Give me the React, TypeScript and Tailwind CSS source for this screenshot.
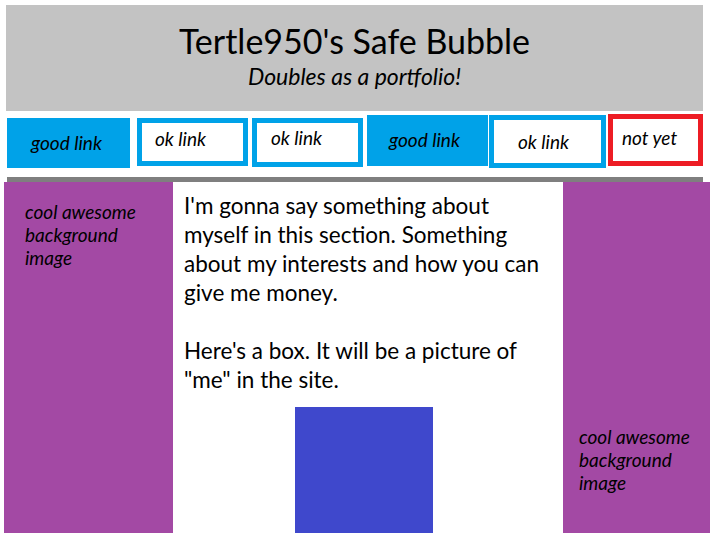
const navFont = "font-['Lato',sans-serif] italic text-[19px] text-black";

export default function App() {
  return (
    <div className="w-[710px] h-[533px] overflow-hidden bg-white font-['Lato',sans-serif] text-black">
      {/* header */}
      <div className="ml-[6px] mt-[5px] w-[697px] h-[106px] bg-[#c3c3c3] flex flex-col items-center pt-[17px]">
        <h1 className="text-[34px] leading-[37px]">Tertle950's Safe Bubble</h1>
        <p className="text-[23px] leading-[26px] italic mt-[4px]">Doubles as a portfolio!</p>
      </div>

      {/* nav */}
      <div className="flex items-start mt-[3px] h-[55px]">
        <div className={`ml-[7px] mt-[4px] w-[123px] h-[50px] bg-[#00a2e8] pl-[24px] pt-[11px] ${navFont}`}>good link</div>
        <div className={`ml-[7px] mt-[4px] w-[111px] h-[48px] border-[5px] border-[#00a2e8] pl-[13px] pt-[2px] ${navFont}`}>ok link</div>
        <div className={`ml-[4px] mt-[4px] w-[111px] h-[49px] border-[5px] border-[#00a2e8] pl-[14px] pt-[1px] ${navFont}`}>ok link</div>
        <div className={`ml-[4px] mt-[1px] w-[121px] h-[51px] bg-[#00a2e8] pl-[22px] pt-[11px] ${navFont}`}>good link</div>
        <div className={`ml-[1px] mt-[1px] w-[117px] h-[53px] border-[5px] border-[#00a2e8] pl-[24px] pt-[8px] ${navFont}`}>ok link</div>
        <div className={`ml-[2px] w-[95px] h-[52px] border-[5px] border-[#ed1c24] pl-[9px] pt-[5px] ${navFont}`}>not yet</div>
      </div>

      {/* divider */}
      <div className="ml-[7px] mt-[8px] w-[696px] h-[5px] bg-[#7f7f7f]" />

      {/* main */}
      <div className="flex h-[352px]">
        <div className="ml-[4px] w-[169px] bg-[#a349a4] pl-[21px] pt-[18px] italic text-[19px] leading-[23px]">
          cool awesome
          <br />
          background
          <br />
          image
        </div>
        <div className="w-[390px] flex flex-col">
          <div className="pl-[11px] pt-[9px] text-[22.5px] leading-[29px]">
            <p>
              I'm gonna say something about
              <br />
              myself in this section. Something
              <br />
              about my interests and how you can
              <br />
              give me money.
            </p>
            <p className="mt-[29px]">
              Here's a box. It will be a picture of
              <br />
              "me" in the site.
            </p>
          </div>
          <div className="ml-[122px] mt-[13px] w-[138px] flex-1 bg-[#3f48cc]" />
        </div>
        <div className="flex-1 bg-[#a349a4] pl-[16px] pt-[243px] italic text-[19px] leading-[23px]">
          cool awesome
          <br />
          background
          <br />
          image
        </div>
      </div>
    </div>
  );
}
